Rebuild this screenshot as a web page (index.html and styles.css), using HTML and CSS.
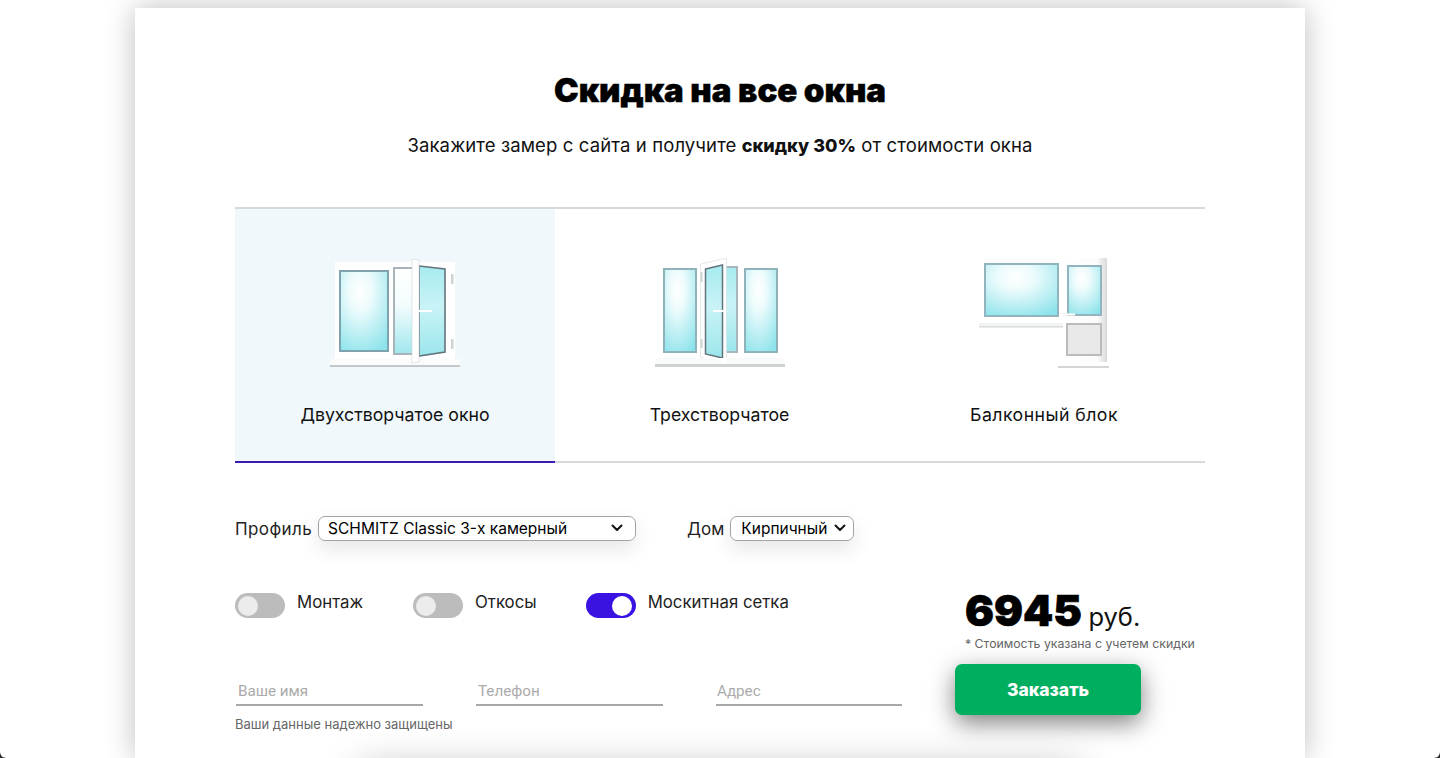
FILE: index.html
```html
<!DOCTYPE html>
<html lang="ru">
<head>
<meta charset="utf-8">
<title>Скидка на все окна</title>
<link rel="stylesheet" href="styles.css">
</head>
<body>
<svg class="defs" width="0" height="0" aria-hidden="true">
  <defs>
    <radialGradient id="glass" cx="0.42" cy="0.25" r="0.85">
      <stop offset="0" stop-color="#ffffff"/>
      <stop offset="0.3" stop-color="#ecfbfc"/>
      <stop offset="1" stop-color="#8ce3eb"/>
    </radialGradient>
    <linearGradient id="sash" x1="0" y1="0" x2="0" y2="1">
      <stop offset="0" stop-color="#a6ebf0"/>
      <stop offset="0.45" stop-color="#c9f3f6"/>
      <stop offset="1" stop-color="#9be6ec"/>
    </linearGradient>
    <linearGradient id="pane" x1="0" y1="0" x2="0" y2="1">
      <stop offset="0" stop-color="#ffffff"/>
      <stop offset="0.45" stop-color="#f2fcfd"/>
      <stop offset="1" stop-color="#9fe7ed"/>
    </linearGradient>
    <linearGradient id="wall" x1="0" y1="0" x2="1" y2="0">
      <stop offset="0" stop-color="#ffffff"/>
      <stop offset="0.78" stop-color="#fbfbfb"/>
      <stop offset="1" stop-color="#d9d9d9"/>
    </linearGradient>
    <filter id="soft"><feGaussianBlur stdDeviation="0.5"/></filter>
  </defs>
</svg>
<main class="card">
  <h1 class="title">Скидка на все окна</h1>
  <p class="lead">Закажите замер с сайта и получите <b>скидку 30%</b> от стоимости окна</p>

  <section class="tabs">
    <div class="tab tab-active">
      <svg class="win" width="140" height="120" viewBox="-5 0 140 120">
        <g filter="url(#soft)">
          <rect x="5" y="4" width="120" height="100" fill="#fff"/>
          <rect x="0" y="101" width="130" height="6" fill="#fafcfc"/>
          <rect x="0" y="107" width="130" height="2" fill="#c3c9cb"/>
          <rect x="10" y="13" width="48" height="80" fill="url(#glass)" stroke="#7fa3ae" stroke-width="2"/>
          <rect x="64" y="10" width="24" height="86" fill="url(#pane)" stroke="#a9b4b8" stroke-width="2"/>
          <path d="M89 8 L115 11 L115 94 L89 98 Z" fill="url(#sash)" stroke="#64757b" stroke-width="1.6"/>
          <path d="M82 1 L89 2 L89 104 L82 105 Z" fill="#fff" stroke="#ced5d7" stroke-width="0.6"/>
          <rect x="87" y="52" width="15" height="2" fill="#fff"/>
          <rect x="121" y="16" width="2.5" height="10" fill="#cfd3d4"/>
          <rect x="121" y="81" width="2.5" height="10" fill="#cfd3d4"/>
        </g>
      </svg>
      <span class="tab-label">Двухстворчатое окно</span>
    </div>
    <div class="tab">
      <svg class="win" width="140" height="120" viewBox="-5 0 140 120">
        <g filter="url(#soft)">
          <rect x="9" y="11" width="32" height="83" fill="url(#glass)" stroke="#8fb2bb" stroke-width="2"/>
          <rect x="90" y="11" width="32" height="83" fill="url(#glass)" stroke="#8fb2bb" stroke-width="2"/>
          <rect x="52" y="9" width="30" height="85" fill="url(#sash)" stroke="#a9b6ba" stroke-width="2"/>
          <path d="M45.5 6 L71.5 0 L71.5 106 L45.5 99 Z" fill="#fff" stroke="#d3d8d9" stroke-width="0.6"/>
          <path d="M50.5 11 L67.5 7 L67.5 100 L50.5 96 Z" fill="url(#sash)" stroke="#64757b" stroke-width="1.5"/>
          <rect x="58" y="52" width="11" height="2" fill="#fff"/>
          <rect x="45.5" y="14" width="2" height="10" fill="#cfd3d4"/>
          <rect x="45.5" y="81" width="2" height="9" fill="#cfd3d4"/>
          <rect x="0" y="100" width="130" height="7" fill="#fafafa"/>
          <rect x="0" y="106" width="130" height="3" fill="#cfd2d3"/>
          <path d="M60 100 L71.5 100 L71.5 106 Z" fill="#fff"/>
        </g>
      </svg>
      <span class="tab-label">Трехстворчатое</span>
    </div>
    <div class="tab">
      <svg class="win" width="140" height="120" viewBox="-1 0 140 120">
        <g filter="url(#soft)">
          <rect x="10" y="6" width="73" height="52" fill="url(#glass)" stroke="#92b4bf" stroke-width="2"/>
          <rect x="88" y="0" width="44" height="104" fill="url(#wall)"/>
          <rect x="93" y="8" width="33" height="49" fill="url(#glass)" stroke="#92b4bf" stroke-width="2"/>
          <rect x="92" y="66" width="34" height="31" fill="#e9e9e9" stroke="#bbbbbb" stroke-width="2"/>
          <rect x="87" y="55.5" width="13" height="2" fill="#fff" stroke="#e4e6e6" stroke-width="0.4"/>
          <rect x="4" y="65" width="84" height="3" fill="#f2f3f3"/>
          <rect x="4" y="68" width="84" height="1.5" fill="#d8dcdc"/>
          <rect x="83" y="108" width="51" height="2" fill="#d2d6d6"/>
        </g>
      </svg>
      <span class="tab-label tab-label-wide">Балконный блок</span>
    </div>
  </section>

  <section class="selects">
    <label class="field">
      <span>Профиль</span>
      <span class="select-wrap select-wide">
        <select class="select">
          <option>SCHMITZ Classic 3-х камерный</option>
        </select>
        <svg class="chevron" width="12" height="8" viewBox="0 0 12 8"><path d="M1.5 1.5 L6 6 L10.5 1.5" fill="none" stroke="#111" stroke-width="2" stroke-linecap="round" stroke-linejoin="round"/></svg>
      </span>
    </label>
    <label class="field field-short">
      <span>Дом</span>
      <span class="select-wrap select-narrow">
        <select class="select">
          <option>Кирпичный</option>
        </select>
        <svg class="chevron" width="12" height="8" viewBox="0 0 12 8"><path d="M1.5 1.5 L6 6 L10.5 1.5" fill="none" stroke="#111" stroke-width="2" stroke-linecap="round" stroke-linejoin="round"/></svg>
      </span>
    </label>
  </section>

  <section class="order">
    <div class="order-left">
      <div class="toggles">
        <div class="toggle-item"><span class="toggle"><span class="knob"></span></span><span class="toggle-label">Монтаж</span></div>
        <div class="toggle-item"><span class="toggle"><span class="knob"></span></span><span class="toggle-label">Откосы</span></div>
        <div class="toggle-item"><span class="toggle toggle-on"><span class="knob"></span></span><span class="toggle-label">Москитная сетка</span></div>
      </div>
      <div class="inputs">
        <input class="input" type="text" placeholder="Ваше имя">
        <input class="input" type="text" placeholder="Телефон">
        <input class="input" type="text" placeholder="Адрес">
      </div>
      <p class="secure">Ваши данные надежно защищены</p>
    </div>
    <div class="order-right">
      <div class="price"><b class="price-num">6945</b> <span class="price-cur">руб.</span></div>
      <p class="price-note">* Стоимость указана с учетем скидки</p>
      <button class="btn" type="button">Заказать</button>
    </div>
  </section>

  <div class="below"></div>
</main>
</body>
</html>
```
FILE: styles.css
```css
* { box-sizing: border-box; }
html { height: 758px; overflow: hidden; background: #2a2a2a; }
body {
  margin: 0;
  height: 758px;
  background: #fff;
  border-radius: 0 0 6px 6px;
  font-family: Inter, "Open Sans", sans-serif;
  color: #111;
}
.defs { position: absolute; }

.card {
  width: 1170px;
  margin: 0 auto;
  position: relative;
  top: 8px;
  padding: 63px 100px 0;
  background: #fff;
  box-shadow: 0 0 28px rgba(0, 0, 0, .26);
  height: 750px;
}
.title {
  margin: 0;
  text-align: center;
  font-size: 33px;
  line-height: 38px;
  font-weight: 900;
  color: #000;
  -webkit-text-stroke: .5px #000;
}
.lead {
  margin: 23px 0 0;
  text-align: center;
  font-size: 18.5px;
  line-height: 26px;
  letter-spacing: .12px;
  color: #111;
}
.lead b { font-weight: 800; letter-spacing: 0; font-size: 18px; }

.tabs {
  display: grid;
  grid-template-columns: repeat(3, 320px);
  column-gap: 4.5px;
  margin-top: 48px;
  border-top: 2px solid #d8d9dc;
  border-bottom: 2px solid #d8d9dc;
}
.tab {
  margin-bottom: -2px;
  padding-top: 49px;
  display: flex;
  flex-direction: column;
  align-items: center;
  height: 254px;
  border-bottom: 2px solid transparent;
}
.tab-active { background: #f0f8fb; border-bottom-color: #3a1bb5; }
.win { display: block; }
.tab-label { margin-top: 26px; font-size: 17.7px; line-height: 22px; color: #111; }
.tab-label-wide { letter-spacing: .45px; }

.selects {
  display: flex;
  gap: 51px;
  margin-top: 53px;
}
.field { display: flex; align-items: center; gap: 6px; font-size: 17px; letter-spacing: .4px; color: #222; }
.field-short { letter-spacing: 0; }
.select-wrap { position: relative; display: block; height: 25px; box-shadow: 0 8px 20px rgba(0,0,0,.1); border-radius: 8px; }
.select-wide { width: 318px; }
.select-narrow { width: 124px; }
.select {
  appearance: none;
  -webkit-appearance: none;
  width: 100%;
  height: 25px;
  padding: 0 10px;
  border: 1px solid #a4a4a4;
  border-radius: 7px;
  background: #fff;
  font-family: Inter, sans-serif;
  font-size: 15.5px;
  letter-spacing: 0;
  color: #000;
}
.select-wide .select { padding-left: 9px; }
.chevron { position: absolute; right: 13px; top: 8px; }
.select-narrow .chevron { right: 8px; }

.order {
  display: flex;
  justify-content: space-between;
  margin-top: 52px;
}
.order-left { width: 700px; }
.toggles { display: flex; gap: 49.5px; }
.toggle-item { display: flex; gap: 12px; }
.toggle-item:first-child { margin-right: .5px; }
.toggle-item:nth-child(2) { margin-right: -.5px; }
.toggle {
  position: relative;
  display: block;
  width: 50px;
  height: 25px;
  border-radius: 13px;
  background: #bcbcbc;
}
.knob {
  position: absolute;
  left: 3px;
  top: 2.5px;
  width: 20px;
  height: 20px;
  border-radius: 50%;
  background: #ececec;
}
.toggle-on { background: #3a13e2; }
.toggle-on .knob { left: auto; right: 4px; background: #fff; }
.toggle-label { font-size: 16.8px; line-height: 18px; color: #222; }

.inputs { display: flex; gap: 53px; margin-top: 60px; padding-left: 1px; }
.input {
  width: 187px;
  height: 28px;
  padding: 0 2px;
  border: 0;
  border-bottom: 2px solid #a8a8a8;
  background: transparent;
  font-family: Roboto, sans-serif;
  font-size: 15.2px;
  outline: none;
}
.input:last-child { width: 186px; padding-left: 1px; }
.input::placeholder { color: #ababab; opacity: 1; }
.secure { margin: 10px 0 0; font-size: 13px; line-height: 17px; color: #666; }

.order-right { width: 250px; }
.price { padding-left: 10px; line-height: 34px; white-space: nowrap; }
.price-num { font-size: 43px; font-weight: 900; color: #000; -webkit-text-stroke: .7px #000; }
.price-cur { margin-left: 2px; font-size: 25.5px; color: #111; }
.price-note { margin: -2px 0 0 10px; font-size: 12.3px; line-height: 18px; color: #666; white-space: nowrap; }
.btn {
  display: block;
  width: 186px;
  height: 51px;
  margin-top: 11px;
  border: 0;
  border-radius: 7px;
  background: #00ae5f;
  color: #fff;
  font-family: Inter, sans-serif;
  font-size: 17.5px;
  font-weight: 800;
  box-shadow: 0 8px 24px rgba(0, 0, 0, .5);
}
.below {
  width: 720px;
  height: 100px;
  margin: 37px auto 0;
  box-shadow: 0 0 40px rgba(0, 0, 0, .3);
}
```
